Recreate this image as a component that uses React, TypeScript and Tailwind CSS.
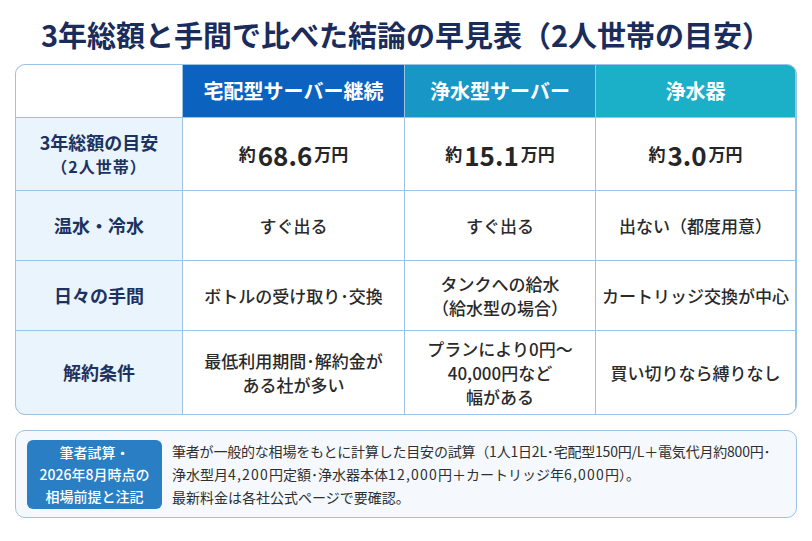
import React from "react";

const font = { fontFamily: '"Noto Sans CJK JP", "Noto Sans", sans-serif' };

function Label({ children }: { children: React.ReactNode }) {
  return (
    <div className="bg-[#e9f4fd] flex flex-col items-center justify-center text-[#1c3260] font-bold text-[18px] leading-[25px] text-center">
      {children}
    </div>
  );
}

function Cell({ children }: { children: React.ReactNode }) {
  return (
    <div className="bg-white flex flex-col items-center justify-center text-[#2a2a2a] font-medium text-[17px] leading-[24px] text-center">
      {children}
    </div>
  );
}

function Price({ v }: { v: string }) {
  return (
    <div className="bg-white flex items-center justify-center text-[#262626] font-bold">
      <span className="text-[17px] font-semibold">約</span>
      <span className="text-[26px] ml-[2px] mr-[2px]">{v}</span>
      <span className="text-[17px] font-semibold">万円</span>
    </div>
  );
}

function N({ children }: { children: React.ReactNode }) {
  return <span className="tracking-[1.2px]">{children}</span>;
}

export default function App() {
  return (
    <div className="w-[812px] h-[541px] bg-white overflow-hidden" style={font}>
      <div className="pt-[15px] h-[64px]">
        <h1 className="text-center text-[29px] leading-[38px] font-bold text-[#1a2c5b]">
          3年総額と手間で比べた結論の早見表（2人世帯の目安）
        </h1>
      </div>
      <div className="mx-[15px] border border-[#9cc3e4] rounded-[10px] overflow-hidden bg-[#9cc3e4]">
        <div className="grid grid-cols-[166px_221px_190px_199px] grid-rows-[52px_72px_69px_69px_83px] gap-px">
          <div className="bg-white" />
          <div className="bg-[#0c62bf] flex items-center justify-center text-white font-bold text-[20px]">宅配型サーバー継続</div>
          <div className="bg-[#1897c6] flex items-center justify-center text-white font-bold text-[20px]">浄水型サーバー</div>
          <div className="bg-[#1cb0c8] flex items-center justify-center text-white font-bold text-[20px]">浄水器</div>

          <Label>
            <span>3年総額の目安</span>
            <span className="text-[16px] leading-[23px] tracking-[1px]">（2人世帯）</span>
          </Label>
          <Price v="68.6" />
          <Price v="15.1" />
          <Price v="3.0" />

          <Label>温水・冷水</Label>
          <Cell>すぐ出る</Cell>
          <Cell>すぐ出る</Cell>
          <Cell>出ない（都度用意）</Cell>

          <Label>日々の手間</Label>
          <Cell>
            <span>ボトルの受け取り･交換</span>
          </Cell>
          <Cell>
            <span>タンクへの給水</span>
            <span>（給水型の場合）</span>
          </Cell>
          <Cell>カートリッジ交換が中心</Cell>

          <Label>解約条件</Label>
          <Cell>
            <span>最低利用期間･解約金が</span>
            <span>ある社が多い</span>
          </Cell>
          <Cell>
            <span>プランにより0円～</span>
            <span>40,000円など</span>
            <span>幅がある</span>
          </Cell>
          <Cell>買い切りなら縛りなし</Cell>
        </div>
      </div>
      <div className="mx-[15px] mt-[15px] h-[88px] border border-[#9cc3e4] rounded-[10px] bg-[#f5f9fd] flex items-center pl-[11px] gap-[10px]">
        <div className="w-[135px] h-[69px] rounded-[6px] bg-[#2a7fc4] text-white text-[14px] leading-[22px] flex flex-col items-center justify-center font-medium">
          <span>筆者試算・</span>
          <span>2026年8月時点の</span>
          <span>相場前提と注記</span>
        </div>
        <div className="text-[14px] leading-[23px] text-[#2f2f2f] whitespace-nowrap">
          <div className="tracking-[-0.2px]">筆者が一般的な相場をもとに計算した目安の試算（1人1日2L･宅配型150円/L＋電気代月約800円･</div>
          <div>浄水型月<N>4,200</N>円定額･浄水器本体<N>12,000</N>円＋カートリッジ年<N>6,000</N>円）。</div>
          <div>最新料金は各社公式ページで要確認。</div>
        </div>
      </div>
    </div>
  );
}
